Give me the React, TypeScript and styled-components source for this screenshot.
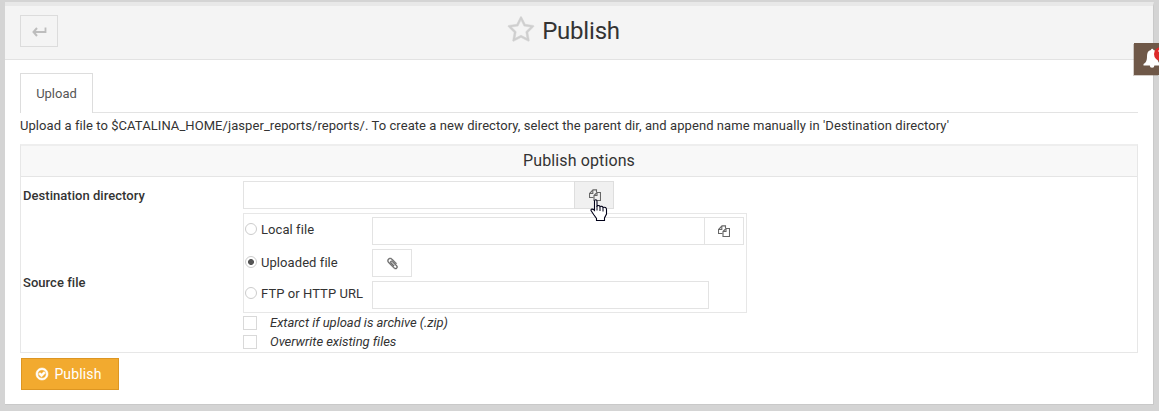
import React from 'react';
import styled, { createGlobalStyle, css } from 'styled-components';

const Global = createGlobalStyle`
  * { box-sizing: border-box; }
  body {
    margin: 0;
    background: #d4d4d4;
    color: #333;
    font: 13px/20px Roboto, sans-serif;
    overflow: hidden;
  }
`;

const Page = styled.div`
  position: relative;
  height: 411px;
  padding: 2px 5px 6px;
  overflow: hidden;
`;

const Panel = styled.main`
  height: 403px;
  background: #fff;
  border-top: 4px solid #e8e8e8;
  border-right: 1px solid #c9c9c9;
  border-bottom: 1px solid #c9c9c9;
`;

const Header = styled.header`
  display: grid;
  grid-template-columns: 38px 1fr 38px;
  align-items: start;
  height: 54px;
  padding: 9px 15px 0;
  background: #f4f4f4;
  border-bottom: 1px solid #e2e2e2;
`;

const BackButton = styled.button`
  display: flex;
  align-items: center;
  justify-content: center;
  width: 38px;
  height: 32px;
  padding: 0;
  color: #bdbdbd;
  background: transparent;
  border: 1px solid #dcdcdc;
`;

const Title = styled.h1`
  display: flex;
  justify-content: center;
  gap: 7px;
  margin: 0;
  padding-right: 31px;
  font-size: 24px;
  font-weight: 400;
  line-height: 32px;
  letter-spacing: -0.2px;
  svg { margin-top: 1px; color: #cfcfcf; }
`;

const Content = styled.div`
  padding: 13px 15px 0;
`;

const TabBar = styled.nav`
  display: flex;
  height: 40px;
  border-bottom: 1px solid #e3e3e3;
`;

const Tab = styled.a`
  width: 73px;
  height: 40px;
  color: #555;
  line-height: 40px;
  text-align: center;
  background: #fff;
  border: 1px solid #ddd;
  border-bottom: 0;
`;

const Hint = styled.p`
  margin: 3px 0 8px;
  letter-spacing: 0.072px;
  white-space: nowrap;
`;

const Options = styled.section`
  height: 209px;
  border: 1px solid #e7e7e7;
  border-top: 2px solid #eee;
`;

const OptionsTitle = styled.h2`
  height: 31px;
  margin: 0;
  font-size: 16px;
  font-weight: 400;
  line-height: 29px;
  letter-spacing: 0.12px;
  text-align: center;
  background: #f8f8f8;
  border-bottom: 1px solid #e5e5e5;
`;

const OptionRow = styled.div<{ $height: number }>`
  display: grid;
  grid-template-columns: 220px 1fr;
  align-items: center;
  height: ${p => p.$height}px;
  padding-left: 2px;
`;

const OptionLabel = styled.label<{ $drop?: number }>`
  padding-top: ${p => p.$drop ?? 0}px;
  font-weight: 500;
  letter-spacing: 0.04px;
`;

const FieldGroup = styled.div`
  display: flex;
`;

const TextInput = styled.input<{ $width: number }>`
  width: ${p => p.$width}px;
  height: 28px;
  padding: 4px 6px;
  background: #fff;
  border: 1px solid #e3e3e3;
  border-radius: 0;
  outline: 0;
`;

const IconButton = styled.button<{ $joined?: boolean; $active?: boolean }>`
  display: flex;
  align-items: center;
  justify-content: center;
  width: 40px;
  height: 28px;
  padding: 0 0 0 ${p => (p.$active ? 2 : 0)}px;
  color: #666;
  background: ${p => (p.$active ? '#f0f0f0' : '#fff')};
  border: 1px solid ${p => (p.$active ? '#dedede' : '#e3e3e3')};
  ${p => p.$joined && css`margin-left: -1px;`}
`;

const SourceCell = styled.div`
  align-self: start;
`;

const SourceBox = styled.div`
  display: flex;
  flex-direction: column;
  gap: 4px;
  width: 504px;
  height: 100px;
  padding: 3px 1px;
  border: 1px solid #e7e7e7;
`;

const SourceRow = styled.div`
  display: grid;
  grid-template-columns: 127px 1fr;
`;

const RadioLabel = styled.label<{ $offset: number }>`
  display: flex;
  align-items: center;
  gap: 4px;
  height: 20px;
  margin-top: ${p => p.$offset}px;
  letter-spacing: 0.07px;
  white-space: nowrap;
`;

const Radio = styled.input.attrs({ type: 'radio' })`
  appearance: none;
  flex: none;
  width: 12px;
  height: 12px;
  margin: 0 0 2px;
  background: #fff;
  border: 1px solid #ccc;
  border-radius: 50%;
  &:checked { background: radial-gradient(circle, #555 0 2.6px, #fff 3.3px); }
`;

const CheckLabel = styled.label`
  display: flex;
  align-items: center;
  gap: 13px;
  height: 19px;
  font-style: italic;
  letter-spacing: -0.04px;
`;

const Checkbox = styled.input.attrs({ type: 'checkbox' })`
  appearance: none;
  width: 14px;
  height: 14px;
  margin: 0;
  background: #fff;
  border: 1px solid #d9d9d9;
`;

const PublishButton = styled.button`
  display: flex;
  align-items: center;
  justify-content: center;
  gap: 5px;
  width: 98px;
  height: 32px;
  margin: 5px 0 0 1px;
  padding: 0 3px 0 0;
  color: #fff;
  font: 14px/20px Roboto, sans-serif;
  letter-spacing: 0.15px;
  background: #f2aa2f;
  border: 1px solid #dd9622;
`;

const Notice = styled.aside`
  position: absolute;
  top: 43px;
  right: 0;
  width: 25px;
  height: 32px;
  overflow: hidden;
  background: #6f5848;
  box-shadow: -1px 1px 0 rgba(111, 88, 72, 0.3);
  svg { display: block; margin: 4px 0 0 9px; }
`;

const Pointer = styled.svg`
  position: absolute;
  left: 590px;
  top: 199px;
`;

const icons = {
  star: 'M1201 1004l306-297-422-62-189-382-189 382-422 62 306 297-73 421 378-199 377 199zm527-357q0 22-26 48l-363 354 86 500q1 7 1 20 0 50-41 50-19 0-40-12l-449-236-449 236q-22 12-40 12-21 0-31.5-14.5t-10.5-35.5q0-6 2-20l86-500-364-354q-25-27-25-48 0-37 56-46l502-73 225-455q19-41 49-41t49 41l225 455 502 73q56 9 56 46z',
  files: 'M1696 384q40 0 68 28t28 68v1216q0 40-28 68t-68 28h-960q-40 0-68-28t-28-68v-288h-544q-40 0-68-28t-28-68v-672q0-40 20-88t48-76l408-408q28-28 76-48t88-20h416q40 0 68 28t28 68v328q68-40 128-40h416zm-544 213l-299 299h299v-299zm-640-384l-299 299h299v-299zm196 647l316-316v-416h-384v416q0 40-28 68t-68 28h-416v640h512v-256q0-40 20-88t48-76zm956 804v-1152h-384v416q0 40-28 68t-68 28h-416v640h896z',
  clip: 'M1596 1385q0 117-79 196t-196 79q-135 0-235-100l-777-776q-113-115-113-271 0-159 110-270t269-111q158 0 273 113l605 606q10 10 10 22 0 16-30.5 46.5t-46.5 30.5q-13 0-23-10l-606-607q-79-77-181-77-106 0-179 75t-73 181q0 105 76 181l776 777q63 63 145 63 64 0 106-42t42-106q0-82-63-145l-581-581q-26-24-60-24-29 0-48 19t-19 48q0 32 25 59l410 410q10 10 10 22 0 16-31 47t-47 31q-12 0-22-10l-410-410q-63-61-63-149 0-82 57-139t139-57q88 0 149 63l581 581q100 98 100 235z',
  check: 'M1299 813l-422 422q-19 19-45 19t-45-19l-294-294q-19-19-19-45t19-45l102-102q19-19 45-19t45 19l147 147 275-275q19-19 45-19t45 19l102 102q19 19 19 45t-19 45zm141 83q0-148-73-273t-198-198-273-73-273 73-198 198-73 273 73 273 198 198 273 73 273-73 198-198 73-273zm224 0q0 209-103 385.5t-279.5 279.5-385.5 103-385.5-103-279.5-279.5-103-385.5 103-385.5 279.5-279.5 385.5-103 385.5 103 279.5 279.5 103 385.5z',
};

function Icon({ name, size, bold }: { name: keyof typeof icons; size: number; bold?: number }) {
  return (
    <svg width={size} height={size} viewBox="0 0 1792 1792" fill="currentColor" stroke="currentColor" strokeWidth={bold ?? 0} aria-hidden="true">
      <path d={icons[name]} />
    </svg>
  );
}

function FilesIcon() {
  return (
    <svg width="12" height="12" viewBox="0 0 12 12" fill="none" stroke="currentColor" strokeWidth="1.100" aria-hidden="true">
      <path d="M4.500 8.500H.5v-4L4 .9h3.500v2" />
      <path d="M3.800.9v3.600H.5" />
      <path d="M5 6.500L8 3.500h3.500v8H5z" />
      <path d="M8 3.500v3H5" />
    </svg>
  );
}

export default function App() {
  return (
    <Page>
      <Global />
      <Panel>
        <Header>
          <BackButton aria-label="Back">
            <svg width="15" height="11" viewBox="0 0 15 11" fill="none" stroke="currentColor" aria-hidden="true">
              <path d="M13.500 1.500v4.500H2" strokeWidth="1.800" />
              <path d="M5 2L1.500 6L5 10" strokeWidth="2" />
            </svg>
          </BackButton>
          <Title><Icon name="star" size={28} bold={30} />Publish</Title>
        </Header>
        <Content>
          <TabBar><Tab>Upload</Tab></TabBar>
          <Hint>
            Upload a file to $CATALINA_HOME/jasper_reports/reports/. To create a new directory, select the parent dir, and append name manually in 'Destination directory'
          </Hint>
          <Options>
            <OptionsTitle>Publish options</OptionsTitle>
            <OptionRow $height={36}>
              <OptionLabel $drop={2}>Destination directory</OptionLabel>
              <FieldGroup>
                <TextInput $width={332} aria-label="Destination directory" />
                <IconButton $joined $active aria-label="Browse"><FilesIcon /></IconButton>
              </FieldGroup>
            </OptionRow>
            <OptionRow $height={139}>
              <OptionLabel>Source file</OptionLabel>
              <SourceCell>
                <SourceBox>
                  <SourceRow>
                    <RadioLabel $offset={3}><Radio name="source" />Local file</RadioLabel>
                    <FieldGroup>
                      <TextInput $width={333} aria-label="Local file" />
                      <IconButton $joined aria-label="Browse"><FilesIcon /></IconButton>
                    </FieldGroup>
                  </SourceRow>
                  <SourceRow>
                    <RadioLabel $offset={4}><Radio name="source" defaultChecked />Uploaded file</RadioLabel>
                    <IconButton aria-label="Attach"><Icon name="clip" size={13} bold={60} /></IconButton>
                  </SourceRow>
                  <SourceRow>
                    <RadioLabel $offset={3}><Radio name="source" />FTP or HTTP URL</RadioLabel>
                    <TextInput $width={337} aria-label="URL" />
                  </SourceRow>
                </SourceBox>
                <CheckLabel><Checkbox />Extarct if upload is archive (.zip)</CheckLabel>
                <CheckLabel><Checkbox />Overwrite existing files</CheckLabel>
              </SourceCell>
            </OptionRow>
          </Options>
          <PublishButton><Icon name="check" size={14} bold={70} />Publish</PublishButton>
        </Content>
      </Panel>
      <Notice>
        <svg width="24" height="24" viewBox="0 0 24 24" fill="#fff" aria-hidden="true">
          <path d="M8 3a1.200 1.200 0 0 1 2.400 0c3 .6 4 3 4 6 0 5 1 6.500 3 8V18.500h-6a2.300 2.300 0 0 1-4.600 0H.5V17C3 15.500 4 14 4 9c0-3 1-5.400 4-6z" />
          <circle cx="18" cy="7" r="7" fill="#dc2b2b" />
          <path d="M15 3.500h1v1h-1z" />
        </svg>
      </Notice>
      <Pointer width="18" height="23" viewBox="0 0 18 23" aria-hidden="true">
        <path d="M4.500 2.500C4.500 .2 7 .2 7 2.500V7c1.300-.8 2.700-.5 3 .6 1.200-.7 2.600-.2 3 .9 1.900-.6 3.500.2 3.500 2v4.500l-2 4v2.500H6.500v-2L4 16l-3-4.500c-.3-1.600 1.500-2 3.500-.1z" fill="#fff" stroke="#000018" strokeWidth="1.100" />
        <path d="M7 7V11.500M10 8V12M13 9V12.500" fill="none" stroke="#000018" />
      </Pointer>
    </Page>
  );
}
